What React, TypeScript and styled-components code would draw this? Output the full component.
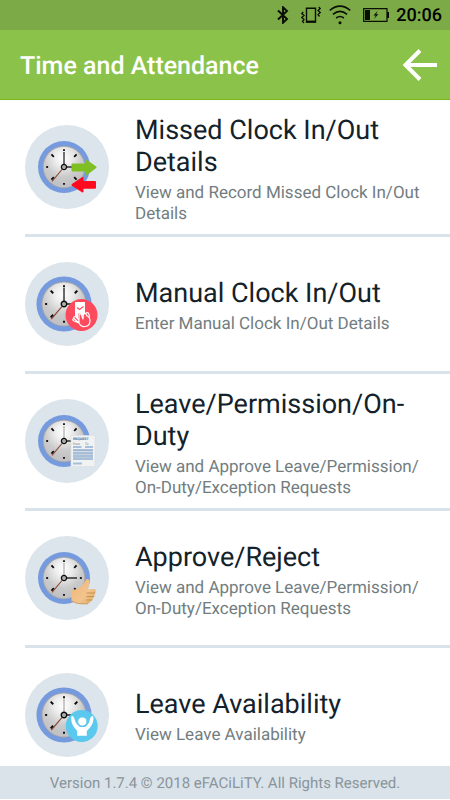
import React from "react";
import styled, { createGlobalStyle } from "styled-components";

const GlobalStyle = createGlobalStyle`
  *, *::before, *::after { box-sizing: border-box; }
  body {
    margin: 0;
    background: #fff;
    font-family: Roboto, "Liberation Sans", sans-serif;
    text-rendering: geometricPrecision;
  }
`;

const Screen = styled.div`
  display: flex;
  flex-direction: column;
  height: 100vh;
  padding-bottom: 1px;
`;

const GradientDefs = styled.svg`
  position: absolute;
`;

const StatusBar = styled.div`
  display: flex;
  flex: none;
  align-items: center;
  justify-content: flex-end;
  height: 30px;
  padding-right: 8px;
  background: #7caa46;
  color: #0a0f05;
`;

const StatusIcon = styled.svg<{ $gap: number }>`
  flex: none;
  margin-right: ${(p) => p.$gap}px;
`;

const Time = styled.time`
  padding-top: 2px;
  font-size: 18px;
  font-weight: 500;
  line-height: 28px;
  color: #000;
`;

const AppBar = styled.header`
  display: flex;
  flex: none;
  align-items: center;
  justify-content: space-between;
  height: 70px;
  padding: 0 12px 0 20px;
  background: #8bc34a;
  border-bottom: 1px solid #76b81a;
`;

const AppTitle = styled.h1`
  margin: 0;
  padding-top: 5px;
  font-size: 25px;
  font-weight: 500;
  line-height: 30px;
  color: #fff;
`;

const BackButton = styled.button`
  display: flex;
  padding: 0;
  border: 0;
  background: none;
  cursor: pointer;
`;

const Menu = styled.ul`
  flex: 1;
  min-height: 0;
  margin: 0;
  padding: 0 0 0 25px;
  overflow-y: auto;
  scrollbar-width: none;
  list-style: none;
`;

const MenuLink = styled.a`
  display: flex;
  align-items: center;
  gap: 26px;
  min-height: 137px;
  border-bottom: 3px solid #dbe3ea;
  color: inherit;
  text-decoration: none;
`;

const Badge = styled.svg`
  flex: none;
`;

const Label = styled.div`
  flex: 1;
  min-width: 0;
  padding: 4px 22px 0 0;
`;

const ItemTitle = styled.h2`
  margin: 0 0 5px;
  font-size: 27px;
  font-weight: 400;
  line-height: 32px;
  color: #13222a;
`;

const ItemText = styled.p`
  margin: 0;
  font-size: 17px;
  line-height: 21px;
  color: #727d80;
`;

const Footer = styled.footer`
  flex: none;
  height: 33px;
  background: #dae2ea;
  font-size: 15px;
  line-height: 35px;
  text-align: center;
  color: #89959a;
`;

type Kind = "swap" | "tap" | "request" | "thumb" | "person";

const ticks = [0, 45, 90, 135, 180, 225, 270, 315];

function Overlay({ kind }: { kind: Kind }) {
  switch (kind) {
    case "swap":
      return (
        <g strokeLinejoin="round" strokeWidth="2">
          <path d="M47.5 39.5H61V35.5L70.5 42.3L61 49.5V45.5H47.5Z" fill="#7fbf22" stroke="#7fbf22" />
          <path d="M70 57H57.5V53L47.5 59.8L57.5 66.5V62.8H70Z" fill="#ff0a1e" stroke="#ff0a1e" />
        </g>
      );
    case "tap":
      return (
        <g>
          <circle cx="56.5" cy="53" r="16" fill="#fd4b5d" />
          <path d="M50 40H60V52L57 54L55 51L53 52L53 57L50 54Z" fill="#fff" />
          <path d="M52 45.5L54.5 47.5L58.5 44.5" fill="none" stroke="#fd4b5d" strokeWidth="1.2" />
          <path
            d="M54 61L54 54Q54 51 56 52L58 57L58.5 51.5Q61 50.5 62 54Q65 55 65 59Q65 64 60 64.5Q56 65 54 61L49 56.5Q48 54 51 55L54 58M49 56.5Q46.5 57 49 59L54 61M59.5 52Q64 48 64.5 55"
            fill="none"
            stroke="#fff"
            strokeWidth="1.2"
            strokeLinejoin="round"
          />
        </g>
      );
    case "request":
      return (
        <g>
          <path d="M46 36.5H70V67.5H46Z" fill="#f0f2f4" stroke="#dce0e3" strokeWidth="0.7" />
          <text x="48" y="41.3" fontSize="3.6" fontWeight="700" fill="#3f6c9a">
            REQUEST
          </text>
          <text x="48" y="46" fontSize="3" fill="#5f5a57">
            From
          </text>
          <text x="60" y="46" fontSize="3" fill="#5f5a57">
            To
          </text>
          <path d="M48 48H56.5M60 48H68M48 51H68M48 54H68M48 57H68M48 60H68M48 64.5H57" stroke="#a8bfd9" strokeWidth="2" />
          <path d="M48 52H68M48 55.3H68M48 58.5H68" stroke="#839fbd" strokeWidth="0.5" />
        </g>
      );
    case "thumb":
      return (
        <g>
          <path
            d="M46.5 54.5Q51 53.5 55 51.5Q59 48.5 61 43.5Q63.5 42 64.5 45Q65 49 62.5 53H69.5Q71.5 53.5 70.5 56Q70.8 57.5 69.5 58.5Q70 61 68 62Q68 64.5 66 65Q65 67.5 62 68H55Q51 68 46.5 65Z"
            fill="url(#skin)"
          />
          <path d="M61.5 57H70M61.5 60.5H69M61.5 64H67" stroke="#bd8845" strokeWidth="0.8" fill="none" />
          <path d="M47 65Q52 68 56 67.8H63" stroke="#c99450" strokeWidth="0.8" fill="none" />
        </g>
      );
    case "person":
      return (
        <g>
          <circle cx="56.7" cy="53" r="16" fill="#5bc8ee" />
          <path
            d="M46.3 43.5Q48.3 41.5 49.5 46Q51 51.5 55 54H60Q64 51.5 65 46Q66.5 41.5 68.5 44Q68.8 50 65 54.5L61.8 58V62.8H52.2V58L49.3 54.5Q45.5 49.5 46.3 43.5Z"
            fill="#fff"
          />
          <circle cx="57.3" cy="48.5" r="4.6" fill="#fff" stroke="#5bc8ee" strokeWidth="1" />
        </g>
      );
  }
}

function ClockBadge({ kind }: { kind: Kind }) {
  const large = kind === "tap" || kind === "person";
  const faded = kind === "request" || kind === "thumb" || kind === "person";
  const scale = large ? 1.06 : 1;
  return (
    <Badge width="84" height="84" viewBox="0 0 84 84" aria-hidden="true">
      <circle cx="42" cy="42" r="42" fill="#dbe5eb" />
      <g transform={`translate(39 42) scale(${scale})`}>
        <circle r="26" fill="#759ade" />
        <circle r="21.2" fill="#a9a9ad" />
        <circle r="20.3" fill="url(#face)" />
        {ticks.map((a) => (
          <path
            key={a}
            d={a % 90 ? "M0 -17.8V-14.4" : "M0 -17.8V-15.9"}
            stroke="#080808"
            strokeWidth="1.8"
            transform={`rotate(${a})`}
          />
        ))}
        <path d="M-2 2.5L-12 14.3" stroke="#8b4531" strokeWidth="1.1" />
        <path d="M0 -2V-15" stroke={faded ? "#a5a5a5" : "#000"} strokeWidth="1.1" />
        <path d="M2 0H13" stroke="#000" strokeWidth="1.2" />
        <circle r="2.6" fill="#aaa" stroke="#0d0d0d" strokeWidth="1.3" />
      </g>
      <Overlay kind={kind} />
    </Badge>
  );
}

const items: { kind: Kind; title: string; text: string }[] = [
  { kind: "swap", title: "Missed Clock In/Out Details", text: "View and Record Missed Clock In/Out Details" },
  { kind: "tap", title: "Manual Clock In/Out", text: "Enter Manual Clock In/Out Details" },
  {
    kind: "request",
    title: "Leave/Permission/On-Duty",
    text: "View and Approve Leave/Permission/On-Duty/Exception Requests",
  },
  {
    kind: "thumb",
    title: "Approve/Reject",
    text: "View and Approve Leave/Permission/On-Duty/Exception Requests",
  },
  { kind: "person", title: "Leave Availability", text: "View Leave Availability" },
];

/* Lets a long slash-separated list wrap after "Permission/". */
function Breakable({ text }: { text: string }) {
  const parts = text.split("Permission/");
  return (
    <>
      {parts.map((part, i) => (
        <React.Fragment key={i}>
          {part}
          {i < parts.length - 1 && (
            <>
              Permission/
              <wbr />
            </>
          )}
        </React.Fragment>
      ))}
    </>
  );
}

export default function App() {
  return (
    <Screen>
      <GlobalStyle />
      <GradientDefs width="0" height="0" aria-hidden="true">
        <defs>
          <radialGradient id="face" cx="0.48" cy="0.28" r="0.65">
            <stop offset="0" stopColor="#fff" />
            <stop offset="0.3" stopColor="#eeeeee" />
            <stop offset="0.7" stopColor="#cbcbcc" />
            <stop offset="1" stopColor="#c2c2c4" />
          </radialGradient>
          <linearGradient id="skin" x1="0" y1="0" x2="1" y2="1">
            <stop offset="0" stopColor="#efb675" />
            <stop offset="0.6" stopColor="#f2c48d" />
            <stop offset="1" stopColor="#d9a45f" />
          </linearGradient>
        </defs>
      </GradientDefs>
      <StatusBar>
        <StatusIcon $gap={12} width="12" height="18" viewBox="0 0 12 18" role="img" aria-label="Bluetooth">
          <path d="M1 4.5L10 13L6 16.8V1.2L10 5L1 13.5" fill="none" stroke="currentColor" strokeWidth="1.9" />
        </StatusIcon>
        <StatusIcon $gap={8} width="20" height="18" viewBox="0 0 20 18" role="img" aria-label="Vibrate">
          <path d="M5.5 2.2H14.5V16H5.5Z" fill="none" stroke="currentColor" strokeWidth="1.4" />
          <path d="M5 15.6H15" stroke="currentColor" strokeWidth="2" />
          <path
            d="M2.3 6L0.8 7.5L3 9.5L0.8 11.5L3 13.5L1.5 15.5L3 17M17.7 1L19.2 2.5L17 4.5L19.2 6.5L17 8.5L18.5 10.5"
            fill="none"
            stroke="currentColor"
            strokeWidth="1.3"
          />
        </StatusIcon>
        <StatusIcon $gap={12} width="22" height="20" viewBox="0 0 22 20" role="img" aria-label="Wi-Fi">
          <path
            d="M0.8 5.4Q11 -3 21.2 5.4M3.9 9.3Q11 3.5 18.1 9.3M7.1 13Q11 10 14.9 13"
            fill="none"
            stroke="currentColor"
            strokeWidth="1.6"
          />
          <circle cx="11" cy="17.8" r="1.5" fill="currentColor" />
        </StatusIcon>
        <StatusIcon $gap={7} width="26" height="14" viewBox="0 0 26 14" role="img" aria-label="Battery charging">
          <path d="M0.7 0.7H24V13.3H0.7Z" fill="none" stroke="currentColor" strokeWidth="1.2" />
          <path d="M2 2H7V12H2ZM24 4H26V10H24Z" fill="currentColor" />
          <path d="M14.5 3L10.5 7.6H12.8L11 11L15.4 6.3H13.2Z" fill="currentColor" />
        </StatusIcon>
        <Time>20:06</Time>
      </StatusBar>
      <AppBar>
        <AppTitle>Time and Attendance</AppTitle>
        <BackButton type="button" aria-label="Back">
          <svg width="36" height="32" viewBox="0 0 36 32" aria-hidden="true">
            <path d="M35 16H4M18 1.5L3.5 16L18 30.5" fill="none" stroke="#fff" strokeWidth="4" />
          </svg>
        </BackButton>
      </AppBar>
      <Menu>
        {items.map((item) => (
          <li key={item.title}>
            <MenuLink href="#">
              <ClockBadge kind={item.kind} />
              <Label>
                <ItemTitle>{item.title}</ItemTitle>
                <ItemText>
                  <Breakable text={item.text} />
                </ItemText>
              </Label>
            </MenuLink>
          </li>
        ))}
      </Menu>
      <Footer>Version 1.7.4 © 2018 eFACiLiTY. All Rights Reserved.</Footer>
    </Screen>
  );
}
